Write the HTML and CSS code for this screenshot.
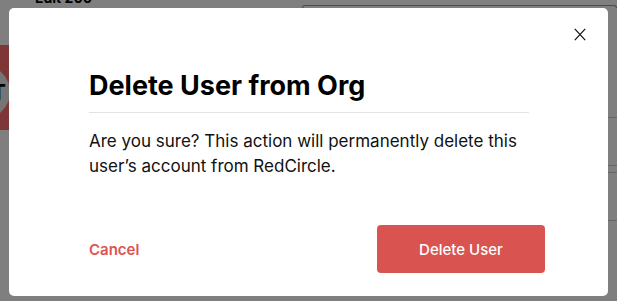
FILE: index.html
```html
<!DOCTYPE html>
<html lang="en">
<head>
<meta charset="utf-8">
<title>Delete User from Org</title>
<link rel="stylesheet" href="styles.css">
</head>
<body>
<div class="page">
  <div class="page-top"><span class="page-top-text">Edit 200</span><span class="page-top-tab"></span></div>
  <div class="page-main">
    <div class="page-side">
      <div class="side-band"><span class="side-avatar">T</span></div>
    </div>
    <div class="page-rows">
      <div class="row r1"></div>
      <div class="row r2"></div>
      <div class="row r3"></div>
      <div class="row r4"></div>
    </div>
  </div>
</div>
<div class="overlay">
  <div class="modal" role="dialog">
    <button class="close" aria-label="Close">
      <svg width="12" height="13" viewBox="0 0 12 13"><path d="M0.8 0.8 L11.2 12.2 M11.2 0.8 L0.8 12.2" stroke="#111" stroke-width="1.2" fill="none"/></svg>
    </button>
    <h2 class="title">Delete User from Org</h2>
    <p class="text">Are you sure? This action will permanently delete this user’s account from RedCircle.</p>
    <div class="footer">
      <button class="btn-cancel">Cancel</button>
      <button class="btn-delete">Delete User</button>
    </div>
  </div>
</div>
</body>
</html>
```
FILE: styles.css
```css
* { box-sizing: border-box; }
html, body { margin: 0; padding: 0; height: 100%; }
body {
  font-family: "Inter", "Noto Sans", sans-serif;
  background: #ffffff;
  overflow: hidden;
}
.page { height: 100%; display: flex; flex-direction: column; background: #fff; }
.page-top { height: 8px; display: flex; align-items: flex-end; padding-left: 35px; overflow: hidden; }
.page-top-text { font-size: 14px; font-weight: 700; color: #000; line-height: 14px; white-space: nowrap; margin-bottom: 3px; }
.page-top-tab { margin-left: 210px; width: 330px; height: 3px; border: 1px solid #999; border-bottom: 0; border-radius: 4px 4px 0 0; }
.page-main { flex: 1; display: flex; }
.page-side { width: 9px; padding-top: 37px; }
.side-band { height: 85px; background: #ff6d6d; position: relative; overflow: hidden; }
.side-avatar { position: absolute; left: -44px; top: 20px; width: 54px; height: 54px; border-radius: 50%; background: #eaeaea; font-size: 22px; font-weight: 700; color: #000; line-height: 54px; text-align: right; padding-right: 4px; }
.page-rows { flex: 1; display: flex; flex-direction: column; padding-top: 109px; }
.row { border-top: 1px solid #ccc; }
.r1 { height: 48px; }
.r2 { height: 7px; }
.r3 { height: 48px; }
.r4 { height: 33px; }

.overlay {
  position: fixed; inset: 0;
  background: rgba(0, 0, 0, 0.5);
  display: flex; justify-content: center; align-items: flex-start;
  padding-top: 8px;
}
.modal {
  position: relative;
  width: 599px; height: 288px;
  background: #fff;
  border-radius: 5px;
  padding: 62px 79px 23px 80px;
  display: flex; flex-direction: column;
}
.close {
  position: absolute; top: 12px; right: 14px;
  width: 28px; height: 28px;
  border: 0; background: transparent; padding: 0;
  display: flex; align-items: center; justify-content: center;
  cursor: pointer;
}
.title {
  margin: 0;
  font-size: 27px; line-height: 32px; font-weight: 700; color: #000;
  padding-bottom: 10px;
  border-bottom: 1px solid #e3e3e3;
}
.text {
  margin: 16px 0 0;
  font-size: 17px; line-height: 25px; color: #111;
}
.footer {
  margin: auto -16px 0;
  display: flex; justify-content: space-between; align-items: center;
}
.btn-cancel {
  border: 0; background: transparent; padding: 0 16px;
  height: 48px;
  font-family: inherit; font-size: 15px; font-weight: 600; color: #dd5551;
  cursor: pointer;
}
.btn-delete {
  width: 168px; height: 48px;
  border: 0; border-radius: 4px;
  background: #d95450; color: #fff;
  font-family: inherit; font-size: 15px; font-weight: 500;
  cursor: pointer;
}
```
